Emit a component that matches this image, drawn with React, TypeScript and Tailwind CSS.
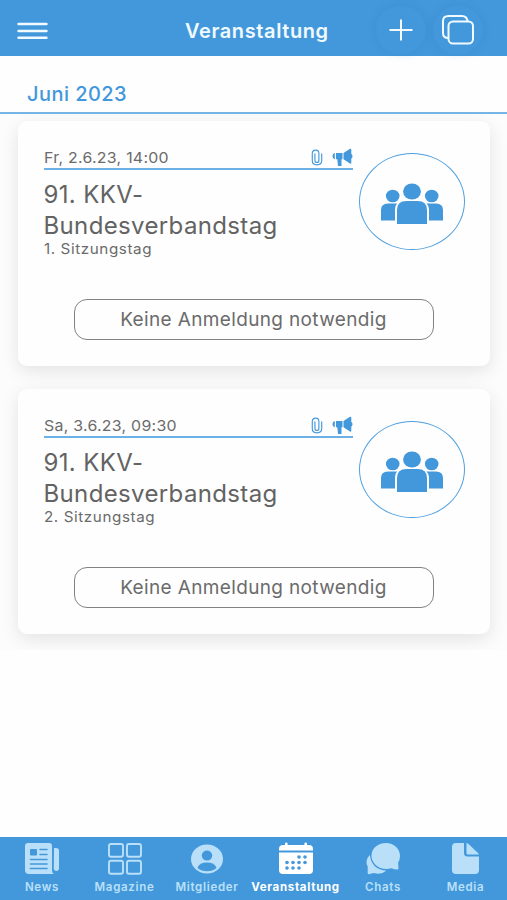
import type { ReactNode } from 'react'

interface EventItem {
  id: number
  date: string
  title: string[]
  subtitle: string
}

interface Tab {
  label: string
  icon: ReactNode
  width: string
  active?: boolean
}

const events: EventItem[] = [
  { id: 1, date: 'Fr, 2.6.23, 14:00', title: ['91. KKV-', 'Bundesverbandstag'], subtitle: '1. Sitzungstag' },
  { id: 2, date: 'Sa, 3.6.23, 09:30', title: ['91. KKV-', 'Bundesverbandstag'], subtitle: '2. Sitzungstag' },
]

const NewsIcon = () => (
  <svg width="36" height="34" viewBox="0 0 36 34" fill="currentColor">
    <path d="M4 1h21a3 3 0 0 1 3 3v24q0 3 2 4H5a4 4 0 0 1-4-4V4a3 3 0 0 1 3-3Z" />
    <path d="M30 6h2a3 3 0 0 1 3 3v18a2.7 2.7 0 0 1-5.2 0Z" />
    <rect x="6" y="7" width="7" height="6.5" rx="1" fill="#4398dc" />
    <path d="M16 7.5h7M16 12.5h7M6.5 17.5H23M6.5 22H23M6.5 26.5H23" stroke="#4398dc" strokeWidth="1.6" strokeLinecap="round" />
  </svg>
)

const GridIcon = () => (
  <svg width="36" height="34" viewBox="0 0 36 34" fill="none" stroke="currentColor" strokeWidth="1.9">
    <rect x="2" y="2" width="14" height="12.8" rx="2" />
    <rect x="20" y="2" width="14" height="12.8" rx="2" />
    <rect x="2" y="18.7" width="14" height="13" rx="2" />
    <rect x="20" y="18.7" width="14" height="13" rx="2" />
  </svg>
)

const PersonIcon = () => (
  <svg width="34" height="32" viewBox="0 0 34 32" fill="currentColor">
    <ellipse cx="17" cy="16" rx="16" ry="14.5" />
    <ellipse cx="17" cy="12.6" rx="5.2" ry="5" fill="#4398dc" />
    <path d="M7.5 25q1.8-5.4 9.5-5.4T26.5 25Q22.5 28.3 17 28.3T7.5 25Z" fill="#4398dc" />
  </svg>
)

const CalendarIcon = () => (
  <svg width="36" height="34" viewBox="0 0 36 34" fill="currentColor">
    <path d="M1 8.5V7a4 4 0 0 1 4-4h2V1.8a1.3 1.3 0 0 1 2.6 0V3h16.8V1.8a1.3 1.3 0 0 1 2.6 0V3h2a4 4 0 0 1 4 4v1.5Z" />
    <path d="M1 10.5h34V28a4 4 0 0 1-4 4H5a4 4 0 0 1-4-4Z" />
    <g fill="#4398dc">
      <circle cx="21" cy="15" r="1.8" />
      <circle cx="27" cy="15" r="1.8" />
      <circle cx="9" cy="20.5" r="1.8" />
      <circle cx="15" cy="20.5" r="1.8" />
      <circle cx="21" cy="20.5" r="1.8" />
      <circle cx="27" cy="20.5" r="1.8" />
      <circle cx="9" cy="26" r="1.8" />
      <circle cx="15" cy="26" r="1.8" />
      <circle cx="21" cy="26" r="1.8" />
    </g>
  </svg>
)

const ChatsIcon = () => (
  <svg width="36" height="34" viewBox="0 0 36 34" fill="currentColor">
    <path d="M5 13C1.5 16 .6 20.5 2.7 24.5v6.5q0 1.500 1.700 1l4.500-1q7 2.500 12.500-2.500C12 28.500 5.500 22 5 13Z" />
    <path
      d="M21 1C12.500 1 6.500 6.600 6.500 13.800S13 27 21.300 27q3 0 5.200-.8 2.500 1.300 5.700 1.300 1.500 0 1.300-1.500l-.4-5.300q1.900-3 1.900-6.700C35 6.600 29 1 21 1Z"
      stroke="#4398dc"
      strokeWidth="1.4"
      paintOrder="stroke"
    />
  </svg>
)

const FileIcon = () => (
  <svg width="30" height="34" viewBox="0 0 30 34" fill="currentColor">
    <path d="M5 1h8v10a3.500 3.500 0 0 0 3.500 3.500H28V28a4 4 0 0 1-4 4H5a4 4 0 0 1-4-4V5a4 4 0 0 1 4-4Z" />
    <path d="M15.500 1q1 0 2 1l9.500 9q.8.700.8 1.500H17q-1.500 0-1.500-1.500Z" />
  </svg>
)

const tabs: Tab[] = [
  { label: 'News', icon: <NewsIcon />, width: 'w-[84px]' },
  { label: 'Magazine', icon: <GridIcon />, width: 'w-[81px]' },
  { label: 'Mitglieder', icon: <PersonIcon />, width: 'w-[84px]' },
  { label: 'Veranstaltung', icon: <CalendarIcon />, width: 'w-[93px]', active: true },
  { label: 'Chats', icon: <ChatsIcon />, width: 'w-[82px]' },
  { label: 'Media', icon: <FileIcon />, width: 'w-[83px]' },
]

const PaperclipIcon = () => (
  <svg width="12" height="17" viewBox="0 0 12 18" fill="none" stroke="currentColor" strokeWidth="1.2" strokeLinecap="round">
    <path d="M3.8 5v7.2a2.1 2.1 0 0 0 4.2 0V4.5C8 2.5 6.9 1.2 4.7 1.2S1 2.7 1 4.8v7.4C1 15 3 16.8 5.9 16.8s5.1-1.8 5.1-4.6V5" />
  </svg>
)

const MegaphoneIcon = () => (
  <svg width="21" height="19" viewBox="0 0 21 19" fill="currentColor">
    <path d="M2.8 5v6.5Q.5 11 .5 8.2T2.8 5ZM4 5h6.5v6.3h-1V18H6l-.7-6.7H4ZM11.5 5 18 .8q1.3-.5 1.3 1V6q1.2.4 1.2 2.2t-1.2 2.3v4.2q0 1.5-1.3.9l-6.5-4.3Z" />
  </svg>
)

const PeopleIcon = () => (
  <svg width="64" height="42" viewBox="0 0 64 42" fill="currentColor">
    <ellipse cx="32" cy="8.5" rx="8.9" ry="8" />
    <ellipse cx="12.7" cy="13" rx="6.8" ry="6.3" />
    <ellipse cx="51.7" cy="13" rx="6.8" ry="6.3" />
    <path d="M1 37.5V27q0-6.5 7-6.5h9Q15 23 15 26v11.5ZM63 37.5V27q0-6.5-7-6.5h-9.5Q49 23 49 26v11.5Z" />
    <path d="M17 41V27q0-9 9.500-9h11q9.500 0 9.500 9v14Z" />
  </svg>
)

const EventCard = ({ event }: { event: EventItem }) => (
  <article className="h-[245px] rounded-[9px] bg-[#fefefe] px-[26px] pt-[27px] shadow-[0_5px_18px_rgba(0,0,0,0.10)]">
    <div className="flex">
      <div className="w-[309px] shrink-0">
        <div className="flex h-[22px] items-center justify-between border-b-2 border-[#6cb0e5] text-[#4398dc]">
          <span className="origin-left scale-x-[1.06] text-[15px] tracking-[0.25px] text-[#6b6b6b]">{event.date}</span>
          <span className="flex items-center gap-[9px] pb-[2px]">
            <PaperclipIcon />
            <MegaphoneIcon />
          </span>
        </div>
        <h2 className="mt-[9px] text-[24px] leading-[31px] tracking-[0.36px] text-[#636363]">
          {event.title[0]}
          <br />
          {event.title[1]}
        </h2>
        <p className="origin-left scale-x-[1.05] text-[14.5px] leading-[16px] tracking-[0.55px] text-[#6b6b6b]">{event.subtitle}</p>
      </div>
      <div className="ml-[6px] mt-[5px] flex h-[97px] w-[106px] shrink-0 items-center justify-center rounded-[50%] border-[1.5px] border-[#4f9fdf] pt-1 text-[#4398dc]">
        <PeopleIcon />
      </div>
    </div>
    <button className="ml-[30px] mt-[42px] flex h-[41px] w-[360px] items-center justify-center rounded-[13px] border-[1.5px] border-[#828282] pt-[2px] text-[19px] tracking-[0.36px] text-[#6b6b6b]">
      Keine Anmeldung notwendig
    </button>
  </article>
)

const App = () => {
  return (
    <div className="flex h-[900px] w-[507px] flex-col overflow-hidden bg-[#fefefe] font-['Inter','Liberation_Sans',sans-serif]">
      <header className="flex h-14 shrink-0 items-center bg-[#4398dc] pt-1 text-[#f0faff]">
        <button className="ml-[17px] pt-px" aria-label="Menu">
          <svg width="31" height="18" viewBox="0 0 31 18" stroke="currentColor" strokeWidth="2.4" strokeLinecap="round">
            <path d="M1.5 2h28M1.5 9h28M1.5 15.8h28" />
          </svg>
        </button>
        <h1 className="ml-[137px] w-[143px] whitespace-nowrap pt-px text-[20px] font-semibold tracking-[0.6px]">Veranstaltung</h1>
        <button className="ml-[48px] flex h-12 w-[50px] items-center justify-center rounded-full shadow-[0_0_10px_rgba(20,90,150,0.14)]" aria-label="Add">
          <svg width="24" height="22" viewBox="0 0 24 22" stroke="currentColor" strokeWidth="2" fill="none">
            <path d="M.5 11h23M12 .5v21" />
          </svg>
        </button>
        <button className="ml-[7px] flex h-12 w-[50px] items-center justify-center rounded-full shadow-[0_0_10px_rgba(20,90,150,0.14)]" aria-label="Copy">
          <svg width="34" height="30" viewBox="0 0 34 30" stroke="currentColor" strokeWidth="2" fill="none">
            <rect x="7.5" y="6.5" width="24.5" height="22" rx="4.5" />
            <path d="M7.5 23Q2 23 2 18V6q0-5 5.500-5H21q5 0 5.500 5.500" />
          </svg>
        </button>
      </header>

      <h2 className="flex h-[58px] shrink-0 items-center border-b-2 border-[#74b4e6] pl-[27px] pt-[19px] text-[20px] font-medium tracking-[0.45px] text-[#4398dc]">
        Juni 2023
      </h2>

      <main className="flex min-h-0 flex-1 flex-col">
        <div className="flex h-[536px] flex-col gap-[23px] overflow-hidden bg-[#fcfcfc] px-[17.5px] pt-[7px]">
          {events.map((event) => (
            <EventCard key={event.id} event={event} />
          ))}
        </div>
      </main>

      <nav className="flex h-[63px] shrink-0 bg-[#4398dc]">
        {tabs.map((tab) => (
          <div
            key={tab.label}
            className={`flex shrink-0 flex-col items-center pt-[5px] ${tab.width} ${tab.active ? 'text-white' : 'text-[#b9e0f8]'}`}
          >
            <span className="flex h-[34px] items-center">{tab.icon}</span>
            <span className={`mt-[3px] whitespace-nowrap text-[11.5px] leading-[16px] ${tab.active ? 'font-bold tracking-[0.7px]' : 'font-semibold tracking-[0.7px]'}`}>
              {tab.label}
            </span>
          </div>
        ))}
      </nav>
    </div>
  )
}

export default App
